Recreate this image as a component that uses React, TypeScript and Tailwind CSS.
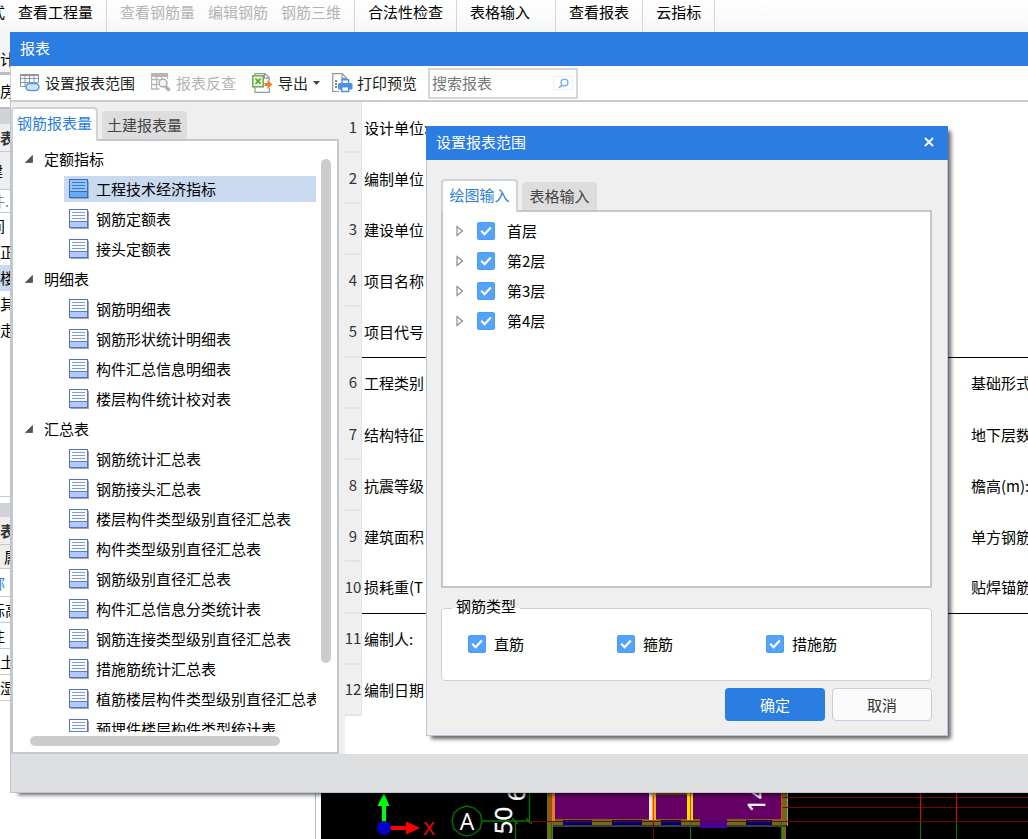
import { useState } from "react";

type Group = {
  name: string;
  items: string[];
};

const groups: Group[] = [
  {
    name: "定额指标",
    items: ["工程技术经济指标", "钢筋定额表", "接头定额表"],
  },
  {
    name: "明细表",
    items: [
      "钢筋明细表",
      "钢筋形状统计明细表",
      "构件汇总信息明细表",
      "楼层构件统计校对表",
    ],
  },
  {
    name: "汇总表",
    items: [
      "钢筋统计汇总表",
      "钢筋接头汇总表",
      "楼层构件类型级别直径汇总表",
      "构件类型级别直径汇总表",
      "钢筋级别直径汇总表",
      "构件汇总信息分类统计表",
      "钢筋连接类型级别直径汇总表",
      "措施筋统计汇总表",
      "植筋楼层构件类型级别直径汇总表",
      "预埋件楼层构件类型统计表",
    ],
  },
];

const rows = [
  ["设计单位:", ""],
  ["编制单位", ""],
  ["建设单位", ""],
  ["项目名称", ""],
  ["项目代号", ""],
  ["工程类别", "基础形式"],
  ["结构特征", "地下层数"],
  ["抗震等级", "檐高(m):"],
  ["建筑面积", "单方钢筋"],
  ["损耗重(T", "贴焊锚筋"],
  ["编制人:", ""],
  ["编制日期", ""],
];

const floors = ["首层", "第2层", "第3层", "第4层"];
const barTypes = ["直筋", "箍筋", "措施筋"];

// left edge of the main program, mostly covered by the report window
const sideRows = [
  { text: "计", box: "h-[40px] pt-[14px] bg-[#f4f5f6]", pos: "" },
  { text: "", box: "h-[3px] bg-[#b9bcc2]", pos: "" },
  { text: "房", box: "h-[32px] bg-white", pos: "" },
  { text: "", box: "h-[17px] border-t-2 border-[#b9bcc2] bg-[#d2d3d9]", pos: "" },
  { text: "表", box: "h-[27px] bg-[#eeeeee] font-bold text-[#333]", pos: "" },
  { text: "建", box: "h-[38px] border-t border-[#c5c8ce] bg-[#eeeeee]", pos: "-ml-3" },
  { text: "件.", box: "h-[24px] border-y border-[#c5c8ce] text-[#888]", pos: "-ml-2.5" },
  { text: "间", box: "h-[26px]", pos: "-ml-2.5" },
  { text: "正", box: "h-[26px]", pos: "" },
  { text: "楼", box: "h-[26px] bg-[#c9d9f0]", pos: "" },
  { text: "其", box: "h-[26px]", pos: "" },
  { text: "走", box: "h-[26px]", pos: "" },
  { text: "", box: "h-[154px] border-b border-[#c5c8ce]", pos: "" },
  { text: "", box: "mt-[6px] h-[14px] bg-[#d2d3d9]", pos: "" },
  { text: "表", box: "h-[28px] border-b border-[#c5c8ce] bg-[#eeeeee] font-bold text-[#333]", pos: "" },
  { text: "属", box: "h-[24px] border-b border-[#c5c8ce] bg-[#eeeeee]", pos: "ml-1" },
  { text: "称", box: "h-[28px] border-b border-[#c5c8ce] text-[#3b7df0]", pos: "-ml-2.5" },
  { text: "标高", box: "h-[26px] border-b border-[#c5c8ce]", pos: "-ml-2.5" },
  { text: "注", box: "h-[26px] border-b border-[#c5c8ce]", pos: "-ml-2.5" },
  { text: "土", box: "h-[26px] border-b border-[#c5c8ce]", pos: "" },
  { text: "湿", box: "h-[26px] border-b border-[#c5c8ce]", pos: "" },
];

function TableRangeIcon() {
  return (
    <svg width="20" height="20" viewBox="0 0 20 20" fill="none">
      <path d="M0.5 1v12.5h6M0.5 1.5h18V9M0.5 5.5h18M0.5 9.5h18M5 1v12.5M9.5 1v9M14 1v9" stroke="#8b97a3" />
      <rect x="0" y="1" width="19" height="2" fill="#8b97a3" />
      <rect x="6" y="10.5" width="13" height="7" rx="3.5" fill="#cfe3fb" stroke="#5b97e0" strokeWidth="1.5" />
    </svg>
  );
}

function TableSearchIcon() {
  return (
    <svg width="20" height="20" viewBox="0 0 20 20" fill="none">
      <path d="M0.5 1v15h8M0.5 6.5h8M0.5 11.5h7M5.5 1v15M10.5 1v4M16.5 1v5" stroke="#b5b5b5" strokeWidth="1.3" />
      <rect x="0" y="0" width="17" height="4" fill="#b5b5b5" />
      <circle cx="12" cy="10" r="4" fill="#f2f2f2" stroke="#a9a9a9" strokeWidth="1.4" />
      <path d="M14.5 13.5l4 4" stroke="#b0b0b0" strokeWidth="3.4" />
    </svg>
  );
}

function ExportIcon() {
  return (
    <svg width="21" height="20" viewBox="0 0 21 20" fill="none">
      <path d="M3 3V0.7h10l4.3 4V8M17.3 15v4.3H3V14M12.5 1v4.2H17" stroke="#8d989f" strokeWidth="1.2" />
      <rect x="0.8" y="2.8" width="10.4" height="11" fill="#eaf5df" stroke="#6bab4b" strokeWidth="1.5" />
      <path d="M3.5 5.500l5 5.500M8.500 5.500l-5 5.500" stroke="#5c9f3b" strokeWidth="1.800" />
      <path d="M12.5 10h3V7l5 4.5-5 4.500V13h-3z" fill="#f47b2a" />
    </svg>
  );
}

function PrintIcon() {
  return (
    <svg width="21" height="20" viewBox="0 0 21 20" fill="none">
      <path d="M7 18.5H0.7V0.7h9.5l4.5 4.5V8M10 1v4.3h4.5" stroke="#8d989f" strokeWidth="1.2" />
      <path d="M3 8h2M3 11h2M3 14h2" stroke="#79848d" strokeWidth="1.800" />
      <rect x="10" y="6.7" width="6.5" height="4" fill="#fff" stroke="#4a90e8" strokeWidth="1.5" />
      <rect x="6" y="10" width="14.5" height="6.5" rx="1.5" fill="#4a90e8" />
      <rect x="9.7" y="13.7" width="7" height="4.8" fill="#fff" stroke="#4a90e8" strokeWidth="1.5" />
    </svg>
  );
}

function ReportIcon({ active }: { active: boolean }) {
  return (
    <svg className="shrink-0" width="20" height="20" viewBox="0 0 20 20">
      <path d="M1.5 19.400h17.900V2" fill="none" stroke="#a3a3a3" strokeWidth="1.200" />
      <rect x="0.5" y="0.5" width="18" height="18" fill={active ? "#93c4f8" : "#fdfdff"} stroke={active ? "#3a6cba" : "#5273c4"} />
      <rect x="1" y="13" width="17" height="5" fill={active ? "#6aa8f5" : "#b4c9fb"} />
      <path d="M1 12.5h17" stroke={active ? "#3a6cba" : "#5c7fd6"} />
      <path d="M3 3.500h13M3 6.500h13M3 9.500h13" stroke={active ? "#3f77cc" : "#7f9be0"} />
    </svg>
  );
}

function Check({ label, gap }: { label: string; gap: string }) {
  const [on, setOn] = useState(true);
  return (
    <label className={`flex items-center ${gap}`}>
      <span className="grid place-items-center">
        <input
          type="checkbox"
          checked={on}
          onChange={() => setOn(!on)}
          className="col-start-1 row-start-1 size-[18px] appearance-none rounded-[2px] border border-[#4b9bf8] bg-white checked:bg-[#55a2fb]"
        />
        {on && (
          <svg className="pointer-events-none col-start-1 row-start-1" width="12" height="10" viewBox="0 0 12 10">
            <path d="M1.2 4.8l3.4 3.4L10.8 1.6" fill="none" stroke="#fff" strokeWidth="2.2" />
          </svg>
        )}
      </span>
      {label}
    </label>
  );
}

function Drawing() {
  return (
    <svg width="707" height="46" viewBox="321 793 707 46">
      {/* axis marker */}
      <rect x="382" y="804" width="4" height="20" fill="#00ff00" />
      <path d="M384 793l-6.500 13h12z" fill="#00ff00" />
      <rect x="390" y="826" width="17" height="4" fill="#ff0000" />
      <path d="M406 821.500v13l14-6.500z" fill="#ff0000" />
      <circle cx="384" cy="828" r="7" fill="#0000c8" />
      <text x="423" y="835" fontSize="18" fill="#ff0000" fontFamily="Liberation Sans">X</text>

      {/* grid bubble and dimensions */}
      <path d="M467 806l7 2 6 5 2 8-2 8-6 5-7 2-7-2-6-5-2-8 2-8 6-5z" fill="none" stroke="#007800" strokeWidth="1.300" />
      <text x="467" y="830" fontSize="23" fill="#fff" textAnchor="middle" fontFamily="Open Sans">A</text>
      <path d="M482 821h47M529.500 793v30M515.500 821v18M526 818l6 6M512 818l6 6" stroke="#007800" strokeWidth="1.300" fill="none" />
      <text transform="translate(512 848) rotate(-90)" fontSize="24" fill="#fff" stroke="#fff" strokeWidth="0.400" fontFamily="Open Sans">150</text>
      <text transform="translate(525 801) rotate(-90)" fontSize="23" fill="#fff" stroke="#fff" strokeWidth="0.400" fontFamily="Open Sans">6</text>

      {/* slab and walls */}
      <rect x="547" y="793" width="6" height="46" fill="#6f6b14" />
      <rect x="553" y="793" width="234" height="26" fill="#660066" />
      <rect x="552" y="819" width="235" height="6" fill="#6f6b14" />
      <path d="M552 826h234" stroke="#777" />
      <rect x="552" y="793" width="3" height="28" fill="#e0802a" />
      <path d="M551.500 793v29" stroke="#ff2000" />
      <rect x="649" y="793" width="3" height="27" fill="#e8e8d0" />
      <rect x="652" y="793" width="4" height="27" fill="#f0b020" />
      <rect x="656" y="793" width="32" height="2" fill="#8a4a10" />
      <rect x="687" y="793" width="6" height="27" fill="#ffe000" />
      <path d="M653.500 796v26M690.500 793v29" stroke="#ff3000" />
      <rect x="782" y="793" width="5" height="32" fill="#6f6b14" />
      <rect x="782" y="827" width="4" height="12" fill="#6f6b14" />
      <path d="M787.500 793v33" stroke="#999" />
      <path d="M781.500 793v27" stroke="#e04010" />
      <path d="M563 822.500h29M612 822.500h30M661 822.500h20M746 822.500h26" stroke="#00006e" strokeWidth="5" />
      <rect x="700" y="819" width="27" height="9" fill="#4b0096" />
      <path d="M653.500 822v17" stroke="#7a0000" />
      <path d="M551.500 822v17M690.500 822v17M781.500 822v17" stroke="#008000" />
      <text transform="translate(765 812) rotate(-90)" fontSize="23" fill="#fff" stroke="#fff" strokeWidth="0.400" fontFamily="Open Sans">14</text>

      {/* grid lines */}
      <path d="M530 821.500h498M783 797.500h245M783 807.500h245" stroke="#800000" />
      <path d="M920.500 793v28M956.500 793v28" stroke="#f00000" />
      <path d="M920.500 822v17M956.500 822v17" stroke="#008000" />
    </svg>
  );
}

function MainProgram() {
  return (
    <div className="flex h-full flex-col">
      <nav className="flex h-8 shrink-0 overflow-hidden bg-linear-to-b from-white to-[#f5f7f6] whitespace-nowrap *:flex *:h-full *:shrink-0 *:items-start *:gap-[13px] *:border-r *:border-[#d5d7da] *:px-[13px] *:pt-[2px]">
        <div className="-ml-[23px]">
          <button>式</button>
          <button>查看工程量</button>
        </div>
        <div className="text-[#b4b4b4]">
          <button disabled>查看钢筋量</button>
          <button disabled>编辑钢筋</button>
          <button disabled>钢筋三维</button>
        </div>
        <div>
          <button>合法性检查</button>
        </div>
        <div>
          <button className="pr-3">表格输入</button>
        </div>
        <div>
          <button>查看报表</button>
        </div>
        <div>
          <button>云指标</button>
        </div>
      </nav>
      <div className="flex min-h-0 flex-1">
        <div className="w-[316px] shrink-0 overflow-hidden border-r border-[#b9bcc2]">
          {sideRows.map((r, i) => (
            <div key={i} className={`flex items-center ${r.box}`}>
              <span className={r.pos}>{r.text}</span>
            </div>
          ))}
        </div>
        <div className="ml-[5px] flex flex-1 items-end overflow-hidden bg-black">
          <Drawing />
        </div>
      </div>
    </div>
  );
}

function ReportTree() {
  const [selected, setSelected] = useState("工程技术经济指标");
  return (
    <ul className="min-w-0 flex-1 overflow-hidden pt-[3px] whitespace-nowrap">
      {groups.map((g) => (
        <li key={g.name}>
          <button className="flex h-[30px] items-center gap-[11px] pl-3">
            <svg width="8" height="8" viewBox="0 0 8 8">
              <path d="M7.500 0.500v7h-7z" fill="#555" stroke="#333" strokeWidth="0.600" />
            </svg>
            {g.name}
          </button>
          <ul>
            {g.items.map((name) => (
              <li key={name} className="flex h-[30px] items-center pl-[51px]">
                <button
                  onClick={() => setSelected(name)}
                  className={`flex h-[26px] w-full items-center gap-[7px] pl-[5px] ${
                    name === selected ? "bg-[#c9d9f0]" : ""
                  }`}
                >
                  <ReportIcon active={name === selected} />
                  {name}
                </button>
              </li>
            ))}
          </ul>
        </li>
      ))}
    </ul>
  );
}

function ReportWindow() {
  return (
    <section className="absolute top-8 right-0 bottom-[46px] left-[10px] flex flex-col bg-[#efefef] shadow-[6px_4px_4px_-2px_rgba(0,0,0,0.6)]">
      <h1 className="h-[34px] shrink-0 bg-[#2b7de1] px-[10px] pt-[6px] text-white">
        报表
      </h1>
      <div className="flex h-[36px] shrink-0 items-center border-b-2 border-l border-[#c8cbd0] bg-white pl-[9px] whitespace-nowrap text-[#222]">
        <button className="flex items-center gap-[5px]">
          <TableRangeIcon />
          设置报表范围
        </button>
        <button disabled className="ml-4 flex items-center gap-[5px] text-[#b4b4b4]">
          <TableSearchIcon />
          报表反查
        </button>
        <button className="ml-4 flex items-center gap-[5px]">
          <ExportIcon />
          导出
          <svg width="7" height="4" viewBox="0 0 7 4">
            <path d="M0 0h7L3.500 4z" fill="#444" />
          </svg>
        </button>
        <button className="ml-3 flex items-center gap-1">
          <PrintIcon />
          打印预览
        </button>
        <div className="ml-[11px] flex h-[31px] w-[150px] items-center border-2 border-[#d3d6da] bg-white">
          <input
            aria-label="搜索报表"
            placeholder="搜索报表"
            className="w-full min-w-0 flex-1 pl-[2px] outline-none placeholder:text-[#777]"
          />
          <button aria-label="搜索" className="mr-[3px] flex h-[14px] w-5 items-center justify-center border border-[#f0f0f0]">
            <svg width="11" height="11" viewBox="0 0 11 11" fill="none">
              <circle cx="6.500" cy="4.500" r="3.400" stroke="#6fb0ec" strokeWidth="1.400" />
              <path d="M4 7l-3 3" stroke="#6fb0ec" strokeWidth="1.600" />
            </svg>
          </button>
        </div>
      </div>

      <div className="flex min-h-0 flex-1">
        <div className="flex w-[329px] shrink-0 flex-col border-l border-[#bcc5d2] pt-[5px]">
          <div role="tablist" className="flex h-8 shrink-0 items-end gap-1">
            <button role="tab" aria-selected="true" className="z-10 -mb-[2px] h-[34px] w-[87px] rounded-t-[4px] border-2 border-b-0 border-[#d0d3d8] bg-white pb-1 text-[#2b7de1]">
              钢筋报表量
            </button>
            <button role="tab" aria-selected="false" className="h-[28px] w-[85px] rounded-t-[4px] bg-[#dddddd] text-[#444]">
              土建报表量
            </button>
          </div>
          <div className="flex min-h-0 flex-1 flex-col border-2 border-[#c3c8cf] bg-white pb-[6px]">
            <div className="flex min-h-0 flex-1">
              <ReportTree />
              <div className="flex w-[21px] shrink-0 flex-col px-[5px] pt-[18px]">
                <div className="h-[88%] w-[10px] rounded-full bg-[#cccccc]" />
              </div>
            </div>
            <div className="mt-1 ml-[17px] h-[10px] w-[250px] rounded-full bg-[#cccccc]" />
          </div>
        </div>

        <div className="ml-[6px] min-w-0 flex-1 overflow-hidden bg-white">
          <table className="h-[614px] w-[1000px] table-fixed border-separate border-spacing-0 whitespace-nowrap text-black">
            <colgroup>
              <col className="w-[17px]" />
              <col className="w-[606px]" />
              <col />
            </colgroup>
            <tbody>
              {rows.map((r, i) => {
                const line = i === 4 || i === 9 ? "border-b border-black" : "";
                return (
                  <tr key={i}>
                    <th className="border-r border-b-2 border-[#e4e4e4] bg-[#efefef] p-0 text-center font-normal text-[#333]">
                      <span className="-mx-1">{i + 1}</span>
                    </th>
                    <td className={`p-0 pl-[2px] ${line}`}>{r[0]}</td>
                    <td className={`p-0 pl-[3px] ${line}`}>{r[1]}</td>
                  </tr>
                );
              })}
            </tbody>
          </table>
        </div>
      </div>
      <div className="h-[39px] shrink-0 border-b border-l border-[#bcc5d2] bg-[#dddee0]" />
    </section>
  );
}

function RangeDialog() {
  return (
    <section
      role="dialog"
      aria-label="设置报表范围"
      className="absolute top-[126px] left-[426px] z-20 w-[522px] bg-[#efefef] shadow-[4px_4px_4px_-1px_rgba(0,0,0,0.6)]"
    >
      <header className="flex h-[34px] items-center justify-between bg-[#2b7de1] px-[10px] pb-[2px] text-white">
        <h2>设置报表范围</h2>
        <button aria-label="关闭" className="flex w-[18px] justify-center">
          <svg width="10" height="10" viewBox="0 0 10 10">
            <path d="M1 1l8 8M9 1l-8 8" stroke="#fff" strokeWidth="1.800" />
          </svg>
        </button>
      </header>
      <div className="border border-t-0 border-[#bcc4d8] pt-[19px] pr-[15px] pb-[14px] pl-[14px]">
        <div role="tablist" className="flex h-[31px] items-end gap-1">
          <button role="tab" aria-selected="true" className="z-10 -mb-[2px] h-[33px] w-[77px] rounded-t-[4px] border-2 border-b-0 border-[#d0d3d8] bg-white pb-1 text-[#2b7de1]">
            绘图输入
          </button>
          <button role="tab" aria-selected="false" className="h-[28px] w-[75px] rounded-t-[4px] bg-[#dddddd] text-[#444]">
            表格输入
          </button>
        </div>
        <ul className="h-[378px] border-2 border-[#c3c6cc] bg-white pt-1">
          {floors.map((f) => (
            <li key={f} className="flex h-[30px] items-center gap-[13px] pl-[13px]">
              <svg width="8" height="12" viewBox="0 0 8 12">
                <path d="M1 1.500v9L6.500 6z" fill="none" stroke="#8a8a8a" strokeWidth="1.200" />
              </svg>
              <Check label={f} gap="gap-3" />
            </li>
          ))}
        </ul>
        <fieldset className="mt-[10px] h-[83px] rounded-[4px] border border-[#cdd0d5] bg-white px-[10px]">
          <legend className="px-1 pb-1 leading-4">钢筋类型</legend>
          <div className="flex pt-4 pl-4">
            {barTypes.map((t) => (
              <div key={t} className="w-[149px]">
                <Check label={t} gap="gap-2" />
              </div>
            ))}
          </div>
        </fieldset>
        <div className="mt-[7px] flex justify-end gap-[7px]">
          <button className="h-[33px] w-[100px] rounded-[4px] bg-[#2b7de1] text-white">
            确定
          </button>
          <button className="h-[33px] w-[100px] rounded-[4px] border border-[#c8cddb] bg-[#fafafa] text-[#333]">
            取消
          </button>
        </div>
      </div>
    </section>
  );
}

export default function App() {
  return (
    <main className="relative h-screen overflow-hidden bg-white font-['Noto_Sans_CJK_SC',sans-serif] text-[15px] leading-5 text-black">
      <MainProgram />
      <ReportWindow />
      <RangeDialog />
    </main>
  );
}
